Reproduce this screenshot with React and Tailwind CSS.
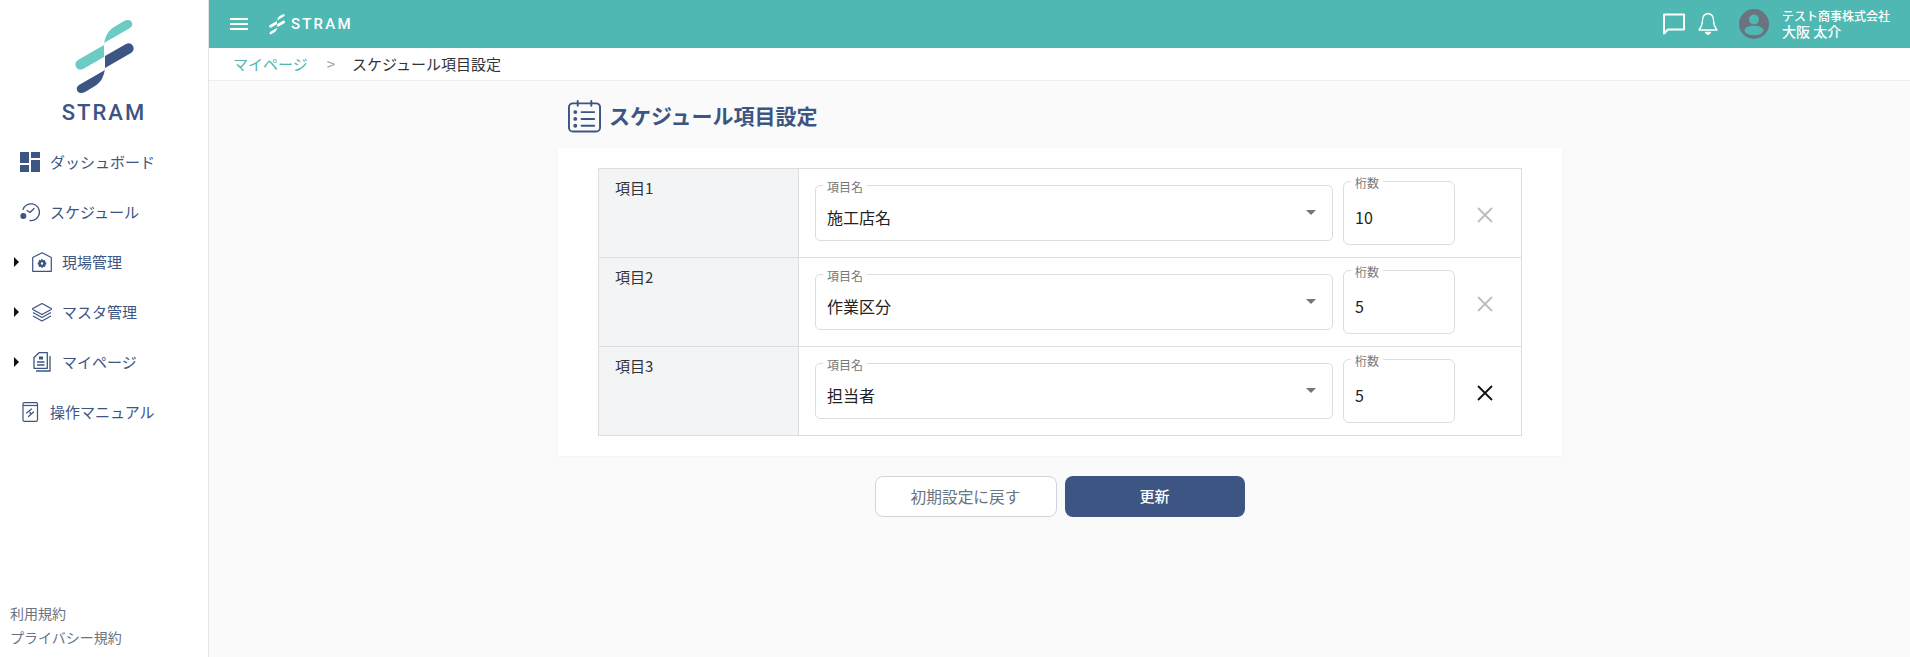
import React from "react";

const NAVY = "#3d5582";
const MARK = "M104 45C105 36 108 31 114 27L124 21Q128 19 131 21Q134 25 130 28L104 43ZM104 45L78 60Q74 63 76 67Q78 71 83 69L104 57Z";

function LogoMark({ className }) {
  return (
    <svg viewBox="72 16 64 80" className={className}>
      <path d={MARK} fill="#6dcbc6" />
      <path d={MARK} fill={NAVY} transform="rotate(180 104.5 56.5)" />
    </svg>
  );
}

function SmallLogo() {
  return (
    <svg viewBox="72 16 64 80" className="w-[18px] h-[22px]">
      <path d={MARK} fill="#fff" />
      <path d={MARK} fill="#fff" transform="rotate(180 104.5 56.5)" />
    </svg>
  );
}

const DashIcon = () => (
  <svg viewBox="0 0 20 20" className="w-5 h-5" fill={NAVY}>
    <rect x="0" y="0" width="9" height="11" />
    <rect x="11" y="0" width="9" height="6" />
    <rect x="11" y="8" width="9" height="12" />
    <rect x="0" y="13" width="9" height="7" />
  </svg>
);

const ScheduleIcon = () => (
  <svg viewBox="0 0 20 20" className="w-5 h-5" fill="none" stroke={NAVY} strokeWidth="1.3">
    <path d="M3 7.5A8.5 8.5 0 0 1 19.5 10A8.5 8.5 0 0 1 10 18.5" strokeLinecap="round" />
    <path d="M7 8.5L10 10.5L14 6.5" strokeLinecap="round" strokeLinejoin="round" />
    <circle cx="3.3" cy="14" r="3" fill={NAVY} stroke="none" />
  </svg>
);

const SiteIcon = () => (
  <svg viewBox="0 0 20 20" className="w-5 h-5" fill="none" stroke={NAVY} strokeWidth="1.2">
    <path d="M.7 5.5L10 .7L19.3 5.5V19.3H.7Z" strokeLinejoin="round" />
    <circle cx="10" cy="11.5" r="2.4" strokeWidth="2.4" />
    <path d="M10 7.2V8.6M10 14.4V15.8M5.7 11.5H7.1M12.9 11.5H14.3M7 8.5L8 9.5M12 13.5L13 14.5M13 8.5L12 9.5M8 13.5L7 14.5" strokeWidth="1.8" />
  </svg>
);

const LayerIcon = () => (
  <svg viewBox="0 0 20 20" className="w-5 h-5" fill="none" stroke={NAVY} strokeWidth="1.2" strokeLinejoin="round">
    <path d="M10 1.5L20 7L10 12.5L0 7Z" />
    <path d="M1 10.5L10 15.5L19 10.5" />
    <path d="M1 14L10 19L19 14" />
  </svg>
);

const PageIcon = () => (
  <svg viewBox="0 0 20 20" className="w-5 h-5" fill="none" stroke={NAVY} strokeWidth="1.3">
    <path d="M7 .7H15.3V16.3H2V5.5Z" strokeLinejoin="round" />
    <path d="M18 4V19H4" />
    <rect x="7" y="4.5" width="4" height="3" fill={NAVY} stroke="none" />
    <path d="M5 10H12.5M5 13H12.5" />
  </svg>
);

const ManualIcon = () => (
  <svg viewBox="0 0 20 20" className="w-5 h-5" fill="none" stroke={NAVY} strokeWidth="1.2">
    <rect x="3" y="0.7" width="14.5" height="18.6" rx="1.2" />
    <path d="M3 3.5H17.5" />
    <path d="M11.5 7L6.5 11M13.5 10L8.5 14.5M10.2 10L10.2 11.5" strokeLinecap="round" />
  </svg>
);

const Arrow = () => <span className="w-0 h-0 border-y-[5px] border-y-transparent border-l-[5px] border-l-[#111]" />;

const navItems = [
  { label: "ダッシュボード", icon: <DashIcon /> },
  { label: "スケジュール", icon: <ScheduleIcon /> },
  { label: "現場管理", icon: <SiteIcon />, sub: true },
  { label: "マスタ管理", icon: <LayerIcon />, sub: true },
  { label: "マイページ", icon: <PageIcon />, sub: true },
  { label: "操作マニュアル", icon: <ManualIcon /> },
];

function Sidebar() {
  return (
    <aside className="w-[209px] shrink-0 bg-white border-r border-[#e5e5e5] flex flex-col justify-between">
      <div>
        <div className="flex flex-col items-center pt-[16px]">
          <LogoMark className="w-[64px] h-[80px]" />
          <div className="mt-[2px] text-[22px] leading-[30px] font-medium tracking-[2px] text-[#3d5582] font-['Roboto',sans-serif]">STRAM</div>
        </div>
        <nav className="mt-[9px]">
          {navItems.map((n) => (
            <div key={n.label} className="h-[50px] flex items-center text-[15px] text-[#3d5582]">
              {n.sub ? (
                <div className="flex items-center pl-[14px]">
                  <Arrow />
                  <span className="ml-[13px] mr-[10px]">{n.icon}</span>
                  <span>{n.label}</span>
                </div>
              ) : (
                <div className="flex items-center pl-[20px]">
                  <span className="mr-[10px]">{n.icon}</span>
                  <span>{n.label}</span>
                </div>
              )}
            </div>
          ))}
        </nav>
      </div>
      <div className="pl-[10px] pb-[8px] text-[14px] leading-[24px] text-[#6b7280]">
        <div>利用規約</div>
        <div>プライバシー規約</div>
      </div>
    </aside>
  );
}

function Header() {
  return (
    <header className="h-[48px] shrink-0 bg-[#4fb8b2] flex items-center justify-between text-white">
      <div className="flex items-center pl-[21px]">
        <svg viewBox="0 0 18 14" className="w-[18px] h-[14px]" fill="none" stroke="#fff" strokeWidth="1.8">
          <path d="M0 2H18M0 7H18M0 12H18" />
        </svg>
        <span className="ml-[20px]"><SmallLogo /></span>
        <span className="ml-[5px] text-[15px] font-medium tracking-[2.2px] font-['Roboto',sans-serif]">STRAM</span>
      </div>
      <div className="flex items-center pr-[21px]">
        <svg viewBox="0 0 22 22" className="w-[22px] h-[22px]" fill="none" stroke="#fff" strokeWidth="2" strokeLinejoin="round">
          <path d="M1 1.5H21V16.5H5L1 20.5Z" />
        </svg>
        <svg viewBox="0 0 20 24" className="ml-[13px] w-[20px] h-[24px]" fill="none" stroke="#fff" strokeWidth="1.3" strokeLinejoin="round">
          <path d="M10 1.5C6 2 4.5 5 4.5 8.5C4.5 13 3 15.5 1 18H19C17 15.5 15.5 13 15.5 8.5C15.5 5 14 2 10 1.5Z" />
          <path d="M7.5 20.5H12.5L10 22.5Z" fill="#fff" />
        </svg>
        <svg viewBox="0 0 30 30" className="ml-[21px] w-[30px] h-[30px]">
          <circle cx="15" cy="15" r="15" fill="#6b7280" />
          <circle cx="15" cy="10.5" r="5" fill="#4fb8b2" />
          <ellipse cx="15" cy="21.5" rx="9.5" ry="4.8" fill="#4fb8b2" />
        </svg>
        <div className="ml-[13px] w-[107px] whitespace-nowrap">
          <div className="text-[12px] leading-[15px] font-medium">テスト商事株式会社</div>
          <div className="text-[14px] leading-[17px] font-medium">大阪 太介</div>
        </div>
      </div>
    </header>
  );
}

function Breadcrumb() {
  return (
    <div className="h-[33px] shrink-0 bg-white border-b border-[#eeeeee] flex items-center pl-[24px] text-[15px]">
      <span className="text-[#4fb8b2]">マイページ</span>
      <span className="ml-[19px] text-[#9ca3af]">&gt;</span>
      <span className="ml-[17px] text-[#333]">スケジュール項目設定</span>
    </div>
  );
}

function Row({ label, name, digits, active, last }) {
  return (
    <div className={`grid grid-cols-[200px_1fr] ${last ? "h-[88px]" : "h-[89px] border-b border-[#dddddd]"}`}>
      <div className="bg-[#f3f4f6] border-r border-[#dddddd] pl-[16px] pt-[8px] text-[15px] leading-[22px] text-[#333]">{label}</div>
      <div className="flex items-center pl-[16px] bg-white">
        <div className="relative w-[518px] h-[56px] border border-[#dddddd] rounded-[5px] flex items-center pl-[11px] pt-[8px] text-[16px] text-[#222]">
          <span className="absolute left-[7px] top-[-7px] px-[4px] bg-white text-[12px] leading-[16px] text-[#777]">項目名</span>
          {name}
          <span className="absolute right-[16px] top-[24px] w-0 h-0 border-x-[5px] border-x-transparent border-t-[5px] border-t-[#757575]" />
        </div>
        <div className="relative ml-[10px] w-[112px] h-[64px] border border-[#dddddd] rounded-[6px] flex items-center pl-[11px] pt-[8px] text-[16px] text-[#222]">
          <span className="absolute left-[7px] top-[-7px] px-[4px] bg-white text-[12px] leading-[16px] text-[#777]">桁数</span>
          {digits}
        </div>
        <svg viewBox="0 0 16 16" className="ml-[22px] mt-[4px] w-[16px] h-[16px]" fill="none" stroke={active ? "#111" : "#bdbdbd"} strokeWidth="1.8">
          <path d="M1 1L15 15M15 1L1 15" />
        </svg>
      </div>
    </div>
  );
}

export default function App() {
  return (
    <div className="flex h-[657px] w-[1910px] overflow-hidden bg-[#fafafa] font-['Noto_Sans_CJK_JP',sans-serif]">
      <Sidebar />
      <main className="flex-1 flex flex-col min-w-0">
        <Header />
        <Breadcrumb />
        <div className="w-[1004px] ml-[349px]">
          <div className="flex items-center h-[67px] pl-[10px] pt-[2px]">
            <svg viewBox="0 0 34 34" className="w-[33px] h-[34px]" fill="none" stroke={NAVY} strokeWidth="2" strokeLinecap="round">
              <rect x="1" y="4" width="32" height="29" rx="4" />
              <path d="M10 1.5V6.5M24 1.5V6.5" />
              <path d="M14 13H27M14 20H27M14 27H27" />
              <circle cx="7.5" cy="13" r="2" fill={NAVY} stroke="none" />
              <circle cx="7.5" cy="20" r="2" fill={NAVY} stroke="none" />
              <circle cx="7.5" cy="27" r="2" fill={NAVY} stroke="none" />
            </svg>
            <h1 className="ml-[8px] text-[21px] font-bold text-[#3d5582]">スケジュール項目設定</h1>
          </div>
          <div className="bg-white shadow-[0_1px_2px_rgba(0,0,0,0.04)] h-[308px] pt-[20px] px-[40px]">
            <div className="border border-[#dddddd]">
              <Row label="項目1" name="施工店名" digits="10" />
              <Row label="項目2" name="作業区分" digits="5" />
              <Row label="項目3" name="担当者" digits="5" active last />
            </div>
          </div>
          <div className="flex justify-center gap-[8px] mt-[20px] pr-[1px]">
            <button type="button" className="w-[182px] h-[41px] bg-white border border-[#d1d5db] rounded-[8px] text-[15.7px] text-[#6b7280]">初期設定に戻す</button>
            <button type="button" className="w-[180px] h-[41px] bg-[#3d5582] rounded-[8px] text-[15px] font-medium text-white">更新</button>
          </div>
        </div>
      </main>
    </div>
  );
}
